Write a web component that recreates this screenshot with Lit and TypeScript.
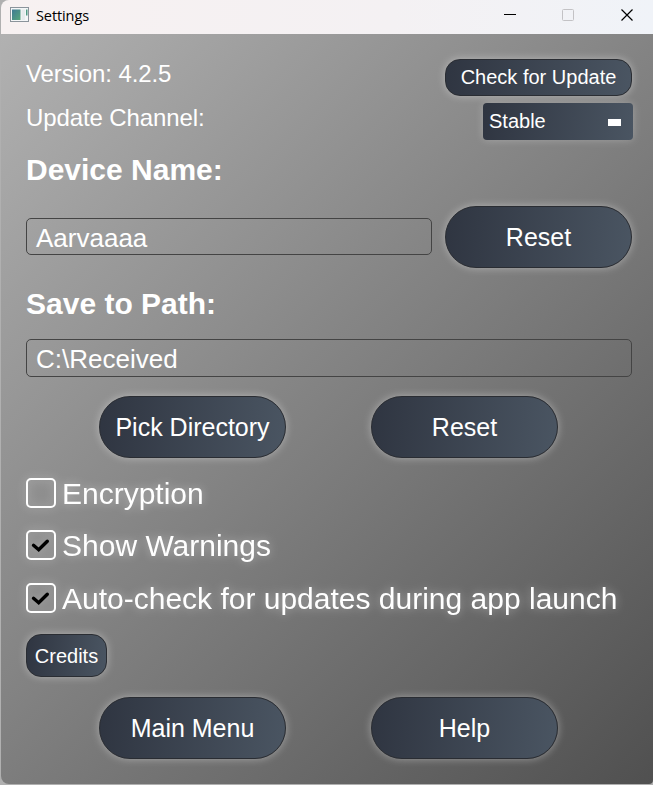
import { LitElement, html, css, svg, nothing } from "lit";
import { customElement, property } from "lit/decorators.js";
import { classMap } from "lit/directives/class-map.js";

@customElement("pill-button")
class PillButton extends LitElement {
  @property() size = "large";

  static styles = css`
    :host { display: block; flex: none; }
    button {
      box-sizing: border-box;
      display: flex;
      align-items: center;
      justify-content: center;
      width: 187px;
      height: 62px;
      padding: 0;
      border: 1px solid #2a2d33;
      border-radius: 31px;
      background: linear-gradient(94deg, #2f3541, #4a5562) border-box;
      box-shadow: 0 0 9px rgba(255, 255, 255, 0.38);
      color: #fff;
      font: 25px/28px "Liberation Sans", Arial, sans-serif;
      white-space: nowrap;
    }
    .compact { height: 37px; padding-bottom: 2px; border-radius: 15px; font-size: 20px; }
    .small { width: 81px; height: 43px; border-radius: 15px; font-size: 20px; }
  `;

  render() {
    return html`<button
      class=${classMap({ compact: this.size === "compact", small: this.size === "small" })}
    ><slot></slot></button>`;
  }
}

@customElement("check-row")
class CheckRow extends LitElement {
  @property({ type: Boolean }) checked = false;

  static styles = css`
    :host {
      display: flex;
      align-items: center;
      gap: 6px;
      height: 34px;
      color: #fff;
      font: 30px/34px "Liberation Sans", Arial, sans-serif;
      white-space: nowrap;
      filter: drop-shadow(0 0 5px rgba(255, 255, 255, 0.42));
    }
    .box {
      box-sizing: border-box;
      display: flex;
      width: 30px;
      height: 30px;
      border: 2px solid #fff;
      border-radius: 5px;
    }
    .text { padding-top: 2px; }
    svg { display: block; width: 26px; height: 26px; }
  `;

  render() {
    const tick = svg`<svg viewBox="0 0 26 26">
      <path d="M5.5 13.3L10.7 17.8L19.3 9.2" fill="none" stroke="#000"
        stroke-width="3.4" stroke-linecap="round" stroke-linejoin="miter" />
    </svg>`;
    return html`<span class="box">${this.checked ? tick : nothing}</span
      ><span class="text"><slot></slot></span>`;
  }
}

@customElement("app-root")
class AppRoot extends LitElement {
  static styles = css`
    :host {
      display: block;
      box-sizing: border-box;
      height: 785px;
      padding: 0 0 1px 1px;
      background: #b0b0b0;
      color: #fff;
      font-family: "Liberation Sans", Arial, sans-serif;
      overflow: hidden;
    }
    .window {
      display: flex;
      flex-direction: column;
      height: 784px;
      border-radius: 8px 0 4px 8px;
      overflow: hidden;
    }
    .titlebar {
      display: flex;
      align-items: center;
      flex: none;
      height: 34px;
      padding-left: 9px;
      box-sizing: border-box;
      background: linear-gradient(90deg, #f7f1f1, #f4f1f3 60%, #f0f3f8);
      color: #000;
    }
    .app-icon { width: 19px; height: 16px; display: block; margin-top: -4px; }
    .title {
      flex: 1;
      margin-left: 7px;
      margin-top: -3px;
      font: 14.5px/20px "Open Sans", "Noto Sans", sans-serif;
      letter-spacing: -0.1px;
    }
    .controls { width: 176px; height: 34px; display: block; }
    .body {
      flex: 1;
      display: flex;
      flex-direction: column;
      box-sizing: border-box;
      padding: 25px 21px 0 25px;
      background: linear-gradient(135deg, #b1b1b1, #505050);
    }
    .row { display: flex; justify-content: space-between; }
    .label { font-size: 24px; line-height: 28px; letter-spacing: -0.1px; white-space: nowrap; }
    .version { padding-top: 1px; height: 42px; }
    .channel { margin-top: 1px; height: 37px; }
    .channel .label { padding-top: 1px; }
    .select {
      display: flex;
      align-items: center;
      justify-content: space-between;
      box-sizing: border-box;
      width: 150px;
      height: 37px;
      margin-right: -1px;
      padding: 0 12px 0 6px;
      border-radius: 4px;
      background: linear-gradient(96deg, #2f3541, #4a5562);
      box-shadow: 0 0 9px rgba(255, 255, 255, 0.26);
      font-size: 20px;
    }
    .mark { width: 13px; height: 7px; background: #fff; margin-top: 2px; }
    h2 { margin: 0; font-size: 30px; line-height: 34px; font-weight: bold; white-space: nowrap; }
    .device { margin-top: 13px; }
    .fields { margin-top: 19px; }
    .input {
      box-sizing: border-box;
      width: 406px;
      height: 37px;
      padding: 2px 9px 0;
      border: 1px solid #444;
      border-radius: 5px;
      font-size: 26px;
      line-height: 35px;
    }
    .fields .input { margin-top: 12px; }
    .input.wide { width: 606px; height: 38px; margin-top: 18px; }
    .save { margin-top: 19px; }
    .pair { display: flex; gap: 85px; padding-left: 73px; }
    .directory { margin-top: 19px; }
    .checks { display: grid; grid-template-rows: 52px 53px 34px; margin-top: 18px; }
    .credits { margin-top: 19px; }
    .footer { margin-top: 20px; }
  `;

  render() {
    return html`
      <div class="window">
        <div class="titlebar">
          <svg class="app-icon" viewBox="0 0 19 16">
            <defs>
              <linearGradient id="screen" x1="0" y1="0" x2="1" y2="1">
                <stop offset="0" stop-color="#3f7a94" />
                <stop offset="1" stop-color="#57a67b" />
              </linearGradient>
            </defs>
            <rect x="0.5" y="0.5" width="18" height="14" fill="#f4f6f7" stroke="#8b949b" />
            <rect x="2" y="2.5" width="8.5" height="10.5" fill="url(#screen)" />
            <rect x="11.5" y="2.5" width="3.5" height="10.5" fill="#e5ebec" />
            <rect x="16" y="2.5" width="1.5" height="6" fill="#4f9a83" />
          </svg>
          <span class="title">Settings</span>
          <svg class="controls" viewBox="0 0 176 34">
            <path d="M27 14.5H39" stroke="#000" />
            <rect x="85.5" y="9.5" width="11" height="11" rx="1" fill="none" stroke="#c3c2c5" />
            <path d="M144.5 9.5L155.5 20.5M155.5 9.5L144.5 20.5" stroke="#000" stroke-width="1.2" />
          </svg>
        </div>
        <div class="body">
          <div class="row">
            <div class="label version">Version: 4.2.5</div>
            <pill-button size="compact">Check for Update</pill-button>
          </div>
          <div class="row channel">
            <div class="label">Update Channel:</div>
            <div class="select">Stable<span class="mark"></span></div>
          </div>
          <h2 class="device">Device Name:</h2>
          <div class="row fields">
            <div class="input">Aarvaaaa</div>
            <pill-button>Reset</pill-button>
          </div>
          <h2 class="save">Save to Path:</h2>
          <div class="input wide">C:\\Received</div>
          <div class="pair directory">
            <pill-button>Pick Directory</pill-button>
            <pill-button>Reset</pill-button>
          </div>
          <div class="checks">
            <check-row>Encryption</check-row>
            <check-row checked>Show Warnings</check-row>
            <check-row checked>Auto-check for updates during app launch</check-row>
          </div>
          <pill-button class="credits" size="small">Credits</pill-button>
          <div class="pair footer">
            <pill-button>Main Menu</pill-button>
            <pill-button>Help</pill-button>
          </div>
        </div>
      </div>
    `;
  }
}
